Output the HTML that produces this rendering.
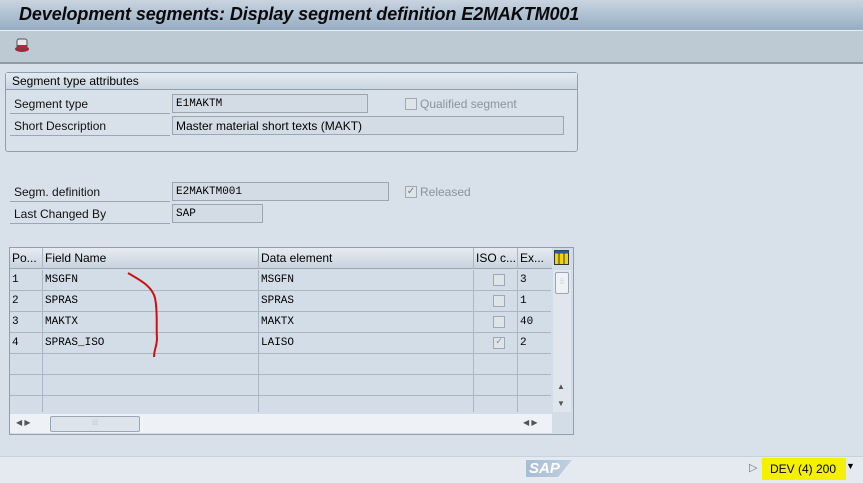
<!DOCTYPE html>
<html><head><meta charset="utf-8"><style>
*{margin:0;padding:0;box-sizing:border-box}
body{width:863px;height:483px;overflow:hidden;background:#d8e1ea;font-family:"Liberation Sans",sans-serif;font-size:12px;color:#000;position:relative}
.a{position:absolute}
.title{left:0;top:0;width:863px;height:31px;background:linear-gradient(#c9d4e0,#96adc3);border-bottom:1px solid #e8eef4}
.title span{position:absolute;left:19px;top:4px;font-size:18px;font-weight:bold;font-style:italic;color:#0a0a0a;letter-spacing:-0.1px}
.tb{left:0;top:31px;width:863px;height:33px;background:#bdcad4;border-bottom:2px solid #8f9ca8}
.lbl{height:19px;line-height:18px;border-bottom:1px solid #9aa8b5;padding-left:4px;font-size:12px;color:#111}
.inp{height:19px;line-height:19px;border:1px solid #9aa6b2;background:#d3dce5;font-family:"Liberation Mono",monospace;font-size:11px;padding-left:3px}
.inp2{font-family:"Liberation Sans",sans-serif;font-size:12px;line-height:18px}
.cb{width:12px;height:12px;border:1px solid #a0a8b0;background:#dde4ea}
.grey{color:#8a939c}
.row{left:11px;width:541px;height:21px;border-bottom:1px solid #aab6c2}
.c{position:absolute;top:0;height:21px;line-height:21px;border-right:1px solid #aab6c2;padding-left:2px;font-family:"Liberation Mono",monospace;font-size:11px}
.status{left:0;top:456px;width:863px;height:27px;background:#e4eaf0;border-top:1px solid #c8d2dc}
</style></head><body>
<div class="a title"><span>Development segments: Display segment definition E2MAKTM001</span></div>
<div class="a tb">
<svg class="a" style="left:13px;top:6px" width="18" height="16"><ellipse cx="9" cy="12" rx="7" ry="3" fill="#b0223a"/><rect x="4" y="2" width="10" height="9" rx="2" fill="#e8e8ec" stroke="#555" stroke-width="1"/><rect x="4" y="8" width="10" height="3" fill="#c0203a"/></svg>
</div>
<div class="a" style="left:5px;top:72px;width:573px;height:80px;border:1px solid #8da0b3;border-radius:3px;background:#d8e1ea"></div>
<div class="a" style="left:6px;top:73px;width:571px;height:17px;background:linear-gradient(#e3eaf1,#cbd6e1);border-bottom:1px solid #8da0b3;padding-left:6px;line-height:16px">Segment type attributes</div>
<div class="a lbl" style="left:10px;top:95px;width:160px">Segment type</div>
<div class="a inp" style="left:172px;top:94px;width:196px">E1MAKTM</div>
<div class="a cb" style="left:405px;top:98px"></div><div class="a grey" style="left:420px;top:97px">Qualified segment</div>
<div class="a lbl" style="left:10px;top:117px;width:160px">Short Description</div>
<div class="a inp inp2" style="left:172px;top:116px;width:392px">Master material short texts (MAKT)</div>

<div class="a lbl" style="left:10px;top:183px;width:160px">Segm. definition</div>
<div class="a inp" style="left:172px;top:182px;width:217px">E2MAKTM001</div>
<div class="a cb" style="left:405px;top:186px;font-size:10px;line-height:10px;color:#777;text-align:center">✓</div><div class="a grey" style="left:420px;top:185px">Released</div>
<div class="a lbl" style="left:10px;top:205px;width:160px">Last Changed By</div>
<div class="a inp" style="left:172px;top:204px;width:91px">SAP</div>

<div class="a" style="left:9px;top:247px;width:565px;height:188px;border:1px solid #8da0b3;background:#d3dde7"></div>
<div class="a" style="left:10px;top:248px;width:542px;height:21px;background:linear-gradient(#e6ecf2,#c8d3de);border-bottom:1px solid #9aa8b6">
<div class="c" style="left:0;width:33px;font-family:'Liberation Sans';font-size:12px">Po...</div>
<div class="c" style="left:33px;width:216px;font-family:'Liberation Sans';font-size:12px">Field Name</div>
<div class="c" style="left:249px;width:215px;font-family:'Liberation Sans';font-size:12px">Data element</div>
<div class="c" style="left:464px;width:44px;font-family:'Liberation Sans';font-size:12px">ISO c...</div>
<div class="c" style="left:508px;width:34px;font-family:'Liberation Sans';font-size:12px;border:0">Ex...</div>
</div>
<svg class="a" style="left:554px;top:250px" width="15" height="15"><rect x="0.5" y="0.5" width="14" height="14" fill="#f2d400" stroke="#333"/><rect x="0.5" y="0.5" width="14" height="3" fill="#2a5a9a"/><line x1="5" y1="3" x2="5" y2="15" stroke="#333"/><line x1="10" y1="3" x2="10" y2="15" stroke="#333"/></svg>
<div class="a" style="left:10px;top:270px;width:542px;height:142px">
<div class="a row" style="left:0;top:0"><div class="c" style="left:0;width:33px">1</div><div class="c" style="left:33px;width:216px">MSGFN</div><div class="c" style="left:249px;width:215px">MSGFN</div><div class="c" style="left:464px;width:44px"><div class="cb" style="margin:4px 0 0 17px"></div></div><div class="c" style="left:508px;width:34px;border:0">3</div></div>
<div class="a row" style="left:0;top:21px"><div class="c" style="left:0;width:33px">2</div><div class="c" style="left:33px;width:216px">SPRAS</div><div class="c" style="left:249px;width:215px">SPRAS</div><div class="c" style="left:464px;width:44px"><div class="cb" style="margin:4px 0 0 17px"></div></div><div class="c" style="left:508px;width:34px;border:0">1</div></div>
<div class="a row" style="left:0;top:42px"><div class="c" style="left:0;width:33px">3</div><div class="c" style="left:33px;width:216px">MAKTX</div><div class="c" style="left:249px;width:215px">MAKTX</div><div class="c" style="left:464px;width:44px"><div class="cb" style="margin:4px 0 0 17px"></div></div><div class="c" style="left:508px;width:34px;border:0">40</div></div>
<div class="a row" style="left:0;top:63px"><div class="c" style="left:0;width:33px">4</div><div class="c" style="left:33px;width:216px">SPRAS_ISO</div><div class="c" style="left:249px;width:215px">LAISO</div><div class="c" style="left:464px;width:44px"><div class="cb" style="margin:4px 0 0 17px;font-size:10px;line-height:10px;color:#888;text-align:center">✓</div></div><div class="c" style="left:508px;width:34px;border:0">2</div></div>
<div class="a row" style="left:0;top:84px"><div class="c" style="left:0;width:33px"></div><div class="c" style="left:33px;width:216px"></div><div class="c" style="left:249px;width:215px"></div><div class="c" style="left:464px;width:44px"></div></div>
<div class="a row" style="left:0;top:105px"><div class="c" style="left:0;width:33px"></div><div class="c" style="left:33px;width:216px"></div><div class="c" style="left:249px;width:215px"></div><div class="c" style="left:464px;width:44px"></div></div>
<div class="a" style="left:0;top:126px;width:542px;height:16px"><div class="c" style="left:0;width:33px;height:16px"></div><div class="c" style="left:33px;width:216px;height:16px"></div><div class="c" style="left:249px;width:215px;height:16px"></div><div class="c" style="left:464px;width:44px;height:16px"></div></div>
</div>
<div class="a" style="left:553px;top:270px;width:18px;height:142px;background:#dfe6ed"></div>
<div class="a" style="left:555px;top:272px;width:14px;height:22px;border:1px solid #9aa6b2;border-radius:2px;background:#eef2f6;color:#aaa;font-size:7px;text-align:center;line-height:20px">⁞⁞</div>
<div class="a" style="left:557px;top:382px;font-size:8px;color:#555">▲</div>
<div class="a" style="left:557px;top:399px;font-size:8px;color:#555">▼</div>
<div class="a" style="left:10px;top:414px;width:542px;height:19px;background:#eef2f6"></div>
<div class="a" style="left:16px;top:418px;font-size:8px;color:#555">◀ ▶</div>
<div class="a" style="left:50px;top:416px;width:90px;height:16px;border:1px solid #9aa6b2;border-radius:2px;background:#dde4ec;color:#aaa;font-size:7px;text-align:center;line-height:14px">⁞⁞⁞</div>
<div class="a" style="left:523px;top:418px;font-size:8px;color:#555">◀ ▶</div>
<svg class="a" style="left:120px;top:268px" width="50" height="95"><path d="M8 5 C20 12 32 18 35 30 C38 45 36 60 37 70 C37 78 34 82 34 89" fill="none" stroke="#d01010" stroke-width="2"/></svg>
<div class="a status"></div>
<div class="a" style="left:526px;top:460px;font-weight:bold;font-style:italic;font-size:15px;color:#fff;background:linear-gradient(90deg,#a8bcd4,#c0d0e0);padding:0 12px 0 3px;clip-path:polygon(0 0,100% 0,70% 100%,0 100%)">SAP</div>
<div class="a" style="left:749px;top:461px;font-size:11px;color:#777">▷</div>
<div class="a" style="left:762px;top:458px;width:84px;height:22px;background:#f5f000;line-height:22px;padding-left:8px;font-size:12px">DEV (4) 200</div>
<div class="a" style="left:846px;top:461px;font-size:9px">▼</div>
</body></html>
